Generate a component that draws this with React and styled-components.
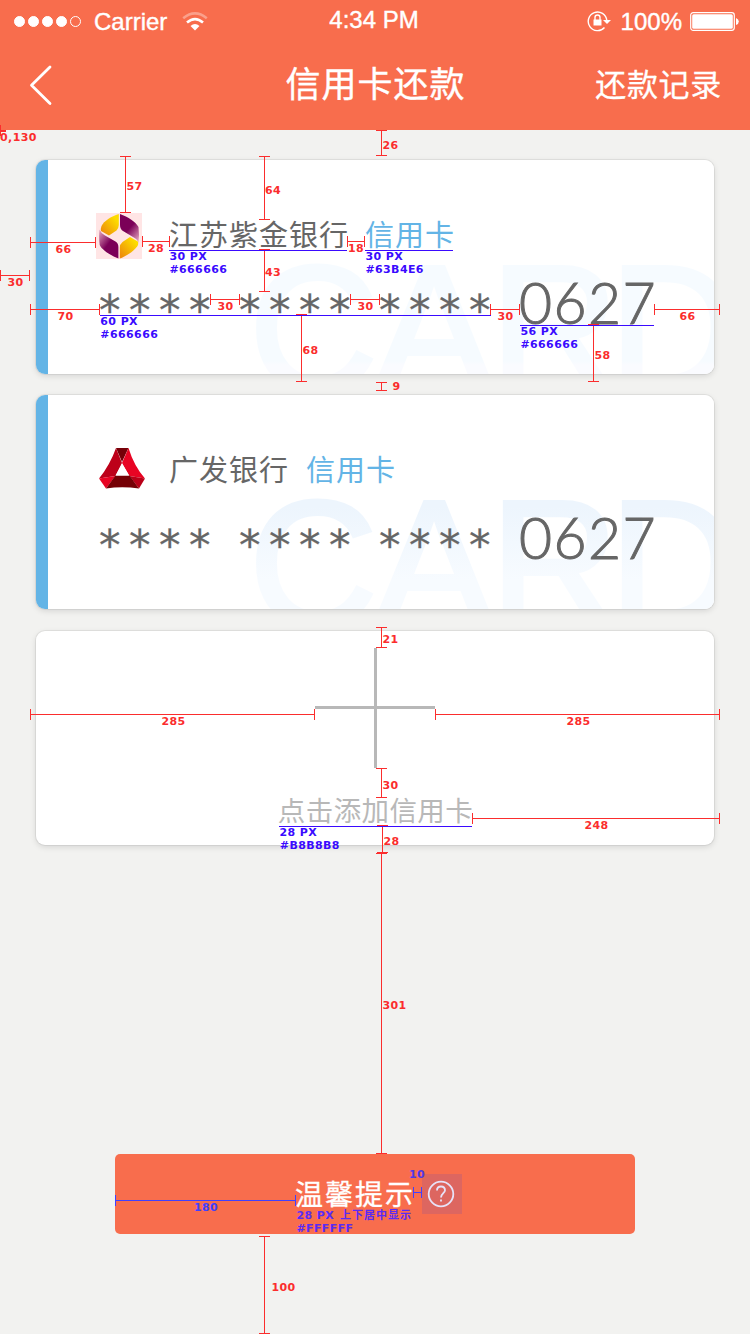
import React from 'react';
import styled, { createGlobalStyle, css } from 'styled-components';

const GlobalStyle = createGlobalStyle`
  * { box-sizing: border-box; }
  body { margin: 0; background: #f2f2f0; }
`;

const RED = '#fb2d2d';
const BLUE = '#3a0aff';

const Screen = styled.div`
  position: relative;
  display: flex;
  flex-direction: column;
  width: 750px;
  height: 1334px;
  overflow: hidden;
  background: #f2f2f0;
  font-family: 'Liberation Sans', 'Noto Sans CJK SC', sans-serif;
`;

const Header = styled.header`
  height: 130px;
  flex: none;
  color: #fff;
  background: #f86d4d;
`;

const StatusBar = styled.div`
  display: grid;
  grid-template-columns: 1fr auto 1fr;
  align-items: center;
  height: 40px;
  padding: 0 11px 0 14px;
  font-size: 24px;
  line-height: 40px;
  -webkit-text-stroke: 0.4px #fff;
`;

const StatusSide = styled.div`
  display: flex;
  align-items: center;
  justify-content: ${(p) => (p.$end ? 'flex-end' : 'flex-start')};
  padding-top: 1px;
`;

const Clock = styled.div`
  padding: 0 5px 2px 0;
  font-size: 24px;
`;

const Signal = styled.div`
  display: flex;
  gap: 3px;
  margin-right: 13px;
`;

const Dot = styled.i`
  width: 11px;
  height: 11px;
  border-radius: 50%;
  border: 1px solid #fff;
  background: ${(p) => (p.$on ? '#fff' : 'transparent')};
`;

const WifiIcon = styled.svg`
  margin-left: 15px;
`;

const LockIcon = styled.svg`
  margin-right: 10px;
`;

const BatteryIcon = styled.svg`
  margin-left: 8px;
`;

const NavBar = styled.nav`
  display: grid;
  grid-template-columns: 1fr auto 1fr;
  align-items: center;
  height: 90px;
  padding: 0 28px 0 29px;
`;

const Title = styled.h1`
  margin: 0;
  font-size: 35px;
  font-weight: 400;
  letter-spacing: 1px;
  line-height: 88px;
  -webkit-text-stroke: 0.4px #fff;
`;

const NavLink = styled.span`
  justify-self: end;
  padding-bottom: 5px;
  font-size: 31px;
  letter-spacing: 0.7px;
  -webkit-text-stroke: 0.3px #fff;
`;

const Main = styled.main`
  display: flex;
  flex-direction: column;
  align-items: center;
  padding-top: 30px;
`;

const Card = styled.section`
  position: relative;
  width: 678px;
  height: 214px;
  margin-bottom: ${(p) => p.$gap || 21}px;
  border-radius: 9px;
  overflow: hidden;
  background: #fff;
  box-shadow: 0 0 0 1px rgba(0, 0, 0, 0.06), 0 2px 6px rgba(0, 0, 0, 0.12);
`;

const BankCard = styled(Card)`
  padding: 50px 0 0 60px;
  background: linear-gradient(90deg, #63b4e6 12px, #fff 12px);
`;

const Watermark = styled.div`
  position: absolute;
  left: 213px;
  top: 67px;
  font-size: 178px;
  line-height: 203px;
  letter-spacing: -3px;
  white-space: nowrap;
  color: transparent;
  -webkit-text-stroke: 4px transparent;
  background: ${(p) =>
    p.$pale
      ? 'linear-gradient(#f6fbff 10%, #f6fbff 66%, #fafbff 68%)'
      : 'linear-gradient(#edf5fd 22%, #f7fbff 58%)'};
  background-clip: text;

  span { letter-spacing: -9.5px; }
`;

const BankRow = styled.div`
  position: relative;
  display: flex;
  align-items: center;
  height: 50px;
  font-size: 29px;
  letter-spacing: 1px;
  color: #666;
`;

const BankName = styled.span`
  margin-top: -4px;
`;

const LogoBox = styled.div`
  display: flex;
  width: 46px;
  height: 46px;
  margin: ${(p) => (p.$tint ? '1px 27px 0 0' : '-5px 24px 0 3px')};
  background: ${(p) => (p.$tint ? '#ffe5e5' : 'transparent')};
`;

const CardKind = styled.span`
  margin-top: -4px;
  margin-left: ${(p) => p.$gap}px;
  color: #63b4e6;
`;

const NumberRow = styled.div`
  position: relative;
  display: flex;
  align-items: flex-start;
  padding-left: 3px;
  color: #666;
`;

const Stars = styled.span`
  width: 140px;
  font-family: 'DejaVu Sans', sans-serif;
  font-size: 43px;
  line-height: 54px;
  letter-spacing: 8.5px;
  margin-top: 23px;
  -webkit-text-stroke: 0.3px #666;
`;

const Digits = styled.span`
  font-family: Lato, sans-serif;
  font-size: 57px;
  font-weight: 300;
  line-height: 68px;
  letter-spacing: 1.4px;
  margin-top: 8px;
  -webkit-text-stroke: 1px #666;
`;

const AddCard = styled(Card)`
  display: flex;
  flex-direction: column;
  align-items: center;
  padding-top: 17px;
  font-size: 27.5px;
  color: #b8b8b8;
`;

const AddText = styled.span`
  margin-top: 24px;
  padding-left: 1px;
  letter-spacing: 0.4px;
  line-height: 40px;
`;

const TipButton = styled.button`
  display: flex;
  align-items: center;
  width: 520px;
  height: 80px;
  margin-top: 288px;
  padding: 0 0 0 180px;
  border: 0;
  border-radius: 5px;
  color: #fff;
  background: #f86d4d;
  font: 28px 'Noto Sans CJK SC', sans-serif;
  letter-spacing: 2px;
`;

const TipText = styled.span`
  padding-bottom: 2px;
  -webkit-text-stroke: 0.3px #fff;
`;

const HelpSlot = styled.span`
  display: flex;
  align-items: center;
  justify-content: center;
  width: 40px;
  height: 40px;
  margin-left: 7px;
  padding-right: 2px;
  background: rgba(90, 70, 190, 0.17);
`;

const Spec = styled.div`
  position: absolute;
  inset: 0;
  pointer-events: none;
`;

const Measure = styled.i`
  position: absolute;
  color: ${(p) => p.$color || RED};
  ${(p) =>
    p.$vertical
      ? css`
          left: ${p.$x - 5}px;
          top: ${p.$y}px;
          width: 11px;
          height: ${p.$len}px;
          border: solid currentColor;
          border-width: 1px 0;
          background: linear-gradient(currentColor, currentColor) 5px 0 / 1px 100% no-repeat;
        `
      : css`
          left: ${p.$x}px;
          top: ${p.$y - 5}px;
          width: ${p.$len}px;
          height: 11px;
          border: solid currentColor;
          border-width: 0 1px;
          background: linear-gradient(currentColor, currentColor) 0 5px / 100% 1px no-repeat;
        `}
`;

const Underline = styled.i`
  position: absolute;
  left: ${(p) => p.$x}px;
  top: ${(p) => p.$y}px;
  width: ${(p) => p.$len}px;
  height: 1px;
  background: ${BLUE};
`;

const Label = styled.span`
  position: absolute;
  left: ${(p) => p.$x}px;
  top: ${(p) => p.$y - 2}px;
  font: bold 11px/13px 'DejaVu Sans', 'Noto Sans CJK SC', sans-serif;
  letter-spacing: ${(p) => (p.$wide ? 1 : 0.4)}px;
  white-space: pre;
  color: ${(p) => p.$color || RED};
`;

const horizontals = [
  [30, 66, 242], [142, 28, 241], [347, 18, 241], [0, 30, 275], [30, 70, 309],
  [210, 30, 299], [350, 30, 299], [490, 30, 309], [654, 66, 309],
  [30, 285, 714], [435, 285, 714], [472, 248, 818],
];

const verticals = [
  [381, 130, 26], [125, 156, 57], [264, 156, 64], [264, 249, 43], [301, 314, 68],
  [593, 324, 58], [381, 382, 9], [381, 627, 21], [381, 768, 30], [382, 825, 28],
  [381, 853, 301], [264, 1236, 98],
];

const redLabels = [
  ['0,130', 0, 133], ['26', 382.4, 141], ['57', 126.4, 182], ['64', 265, 186],
  ['66', 55.4, 245], ['28', 148, 244], ['18', 348, 244], ['43', 265, 268],
  ['30', 7.4, 278], ['70', 57.4, 312], ['30', 217.4, 302], ['30', 357.4, 302],
  ['30', 497.4, 312], ['66', 679.4, 312], ['68', 302.4, 346], ['58', 594.4, 351],
  ['9', 392.4, 382], ['21', 382.4, 635], ['285', 161.4, 717], ['285', 566.4, 717],
  ['30', 382.4, 781], ['248', 584.4, 821], ['28', 383.4, 837], ['301', 382.4, 1001],
  ['100', 271.4, 1283],
];

const blueLabels = [
  ['30 PX', 169.4, 252], ['#666666', 169.4, 265], ['30 PX', 365.4, 252], ['#63B4E6', 365.4, 265],
  ['60 PX', 100.3, 317], ['#666666', 100.3, 330], ['56 PX', 520.4, 327], ['#666666', 520.4, 340],
  ['28 PX', 279.4, 828], ['#B8B8B8', 279.8, 841],
  ['#FFFFFF', 296.4, 1224],
];

const underlines = [
  [169, 250, 178], [365, 250, 88], [100, 315, 391], [520, 325, 134], [279, 826, 193],
];

function ZijinLogo() {
  return (
    <svg width="46" height="46" viewBox="0 0 46 46">
      <defs>
        <linearGradient id="gold" x1="1" y1="0" x2="0" y2="1">
          <stop offset="0.2" stopColor="#fddc00" />
          <stop offset="0.9" stopColor="#ee8d0c" />
        </linearGradient>
        <linearGradient id="plumTop" x1="0.3" y1="0.2" x2="0.9" y2="1">
          <stop offset="0.35" stopColor="#7b0058" />
          <stop offset="1" stopColor="#e7aac0" />
        </linearGradient>
        <linearGradient id="plumLow" x1="0.7" y1="0.8" x2="0" y2="0">
          <stop offset="0.35" stopColor="#7b0058" />
          <stop offset="1" stopColor="#e7aac0" />
        </linearGradient>
      </defs>
      <path d="M22.8 1C15 3.500 8 8 5.500 13Q4.500 15.500 5 18L13 22.500L20.500 17.500Q22.800 15 22.800 12Z" fill="url(#gold)" />
      <path d="M24 1C32 4 40 9 42.500 14Q43.500 22 42.500 30Q41.500 26 37 24L27 18Q24 16 24 12Z" fill="url(#plumTop)" />
      <path d="M3.500 16.500Q5 20.500 9 22.500L19.500 28.500Q22.400 30 22.400 34V45.500C14 42 6 37 3.700 32Q2.700 24 3.500 16.500Z" fill="url(#plumLow)" />
      <path d="M23.800 45.500C31 43 39.500 37 42 32Q42.500 30 41.800 28.500L34 24L26.500 29Q23.800 31 23.800 35Z" fill="url(#gold)" />
    </svg>
  );
}

function GuangfaLogo() {
  return (
    <svg width="46" height="46" viewBox="0 0 46 46">
      <path d="M17 3H29.5L23 17Z" fill="#750008" />
      <path d="M17 3L23 18L16.5 31L0 33.5Q11 20 17 3Z" fill="#bd0019" />
      <path d="M29.5 3L23 18L30.5 31L46 33.5Q35 21 29.5 3Z" fill="#e80423" />
      <path d="M0 33.5L16.5 31L7 43.5Z" fill="#e80423" />
      <path d="M46 33.5L30.5 31L40 43.5Z" fill="#b90018" />
      <path d="M16.5 30.5H30.5L40 43.5Q23 41 7 43.5Z" fill="#750005" />
      <path d="M23 18.5L30 30.5H16.5Z" fill="#fff" />
    </svg>
  );
}

function CardNumber() {
  return (
    <NumberRow>
      <Stars>****</Stars>
      <Stars>****</Stars>
      <Stars>****</Stars>
      <Digits>0627</Digits>
    </NumberRow>
  );
}

function CreditCard({ bank, logo, tint, pale, kindGap, gap }) {
  return (
    <BankCard $gap={gap}>
      <Watermark $pale={pale}>CA<span>R</span>D</Watermark>
      <BankRow>
        <LogoBox $tint={tint}>{logo}</LogoBox>
        <BankName>{bank}</BankName>
        <CardKind $gap={kindGap}>信用卡</CardKind>
      </BankRow>
      <CardNumber />
    </BankCard>
  );
}

export default function App() {
  return (
    <Screen>
      <GlobalStyle />
      <Header>
        <StatusBar>
          <StatusSide>
            <Signal>
              <Dot $on /><Dot $on /><Dot $on /><Dot $on /><Dot />
            </Signal>
            Carrier
            <WifiIcon width="26" height="20" viewBox="0 0 26 20" fill="none" stroke="#fff" strokeWidth="2.6">
              <path d="M1.200 6.200Q13-3.400 24.800 6.200" opacity=".35" />
              <path d="M5 10.500Q13 3.600 21 10.500" />
              <path d="M8.500 14Q13 10.200 17.500 14L13 18.500Z" fill="#fff" stroke="none" />
            </WifiIcon>
          </StatusSide>
          <Clock>4:34 PM</Clock>
          <StatusSide $end>
            <LockIcon width="24" height="22" viewBox="0 0 24 22" fill="none" stroke="#fff" strokeWidth="1.4">
              <path d="M17.500 16.500A9.300 9.300 0 1 1 19.800 9.300" />
              <path d="M16 9H24L20 13Z" fill="#fff" stroke="none" />
              <path d="M6.500 8.500H14.500V14.500H6.500Z" fill="#fff" stroke="none" />
              <path d="M8 9V6.500Q8 4 10.500 4T13 6.500V9" />
            </LockIcon>
            100%
            <BatteryIcon width="49" height="20" viewBox="0 0 49 20">
              <rect x=".7" y=".7" width="43.600" height="17.600" rx="2.500" fill="none" stroke="#fff" strokeWidth="1.200" />
              <rect x="2.200" y="2.200" width="40.600" height="14.600" rx="1.500" fill="#fff" />
              <path d="M46 6Q48.800 7 48.800 9.500T46 13Z" fill="#fff" />
            </BatteryIcon>
          </StatusSide>
        </StatusBar>
        <NavBar>
          <svg width="24" height="42" viewBox="0 0 24 42" fill="none" stroke="#fff" strokeWidth="2.800" strokeLinecap="round" strokeLinejoin="round">
            <path d="M21 3L2.500 21.300L21 39.600" />
          </svg>
          <Title>信用卡还款</Title>
          <NavLink>还款记录</NavLink>
        </NavBar>
      </Header>

      <Main>
        <CreditCard bank="江苏紫金银行" logo={<ZijinLogo />} tint pale kindGap={16} />
        <CreditCard bank="广发银行" logo={<GuangfaLogo />} kindGap={17} gap={22} />
        <AddCard>
          <svg width="120" height="120" viewBox="0 0 120 120" fill="#b8b8b8">
            <path d="M59 0h3v120h-3zM0 58h120v3H0z" />
          </svg>
          <AddText>点击添加信用卡</AddText>
        </AddCard>
        <TipButton>
          <TipText>温馨提示</TipText>
          <HelpSlot>
            <svg width="28" height="28" viewBox="0 0 28 28" fill="none" stroke="#e7e2f8" strokeWidth="1.800">
              <circle cx="14" cy="14" r="12.300" />
              <path d="M10 10.500Q10 6.500 14 6.500T18 10.300C18 13 14 13.500 14 17.500M14 19.500V21.500" />
            </svg>
          </HelpSlot>
        </TipButton>
      </Main>

      <Spec>
        {horizontals.map(([x, len, y]) => (
          <Measure key={`${x}-${y}`} $x={x} $y={y} $len={len} />
        ))}
        {verticals.map(([x, y, len]) => (
          <Measure key={`${x}-${y}`} $vertical $x={x} $y={y} $len={len} />
        ))}
        <Measure $x={-6} $y={130} $len={7} />
        <Measure $vertical $x={0} $y={130} $len={1} />
        <Measure $color="#4040ff" $x={115} $y={1200} $len={181} />
        <Measure $color="#4040ff" $x={413} $y={1192} $len={9} />
        {underlines.map(([x, y, len]) => (
          <Underline key={`${x}-${y}`} $x={x} $y={y} $len={len} />
        ))}
        {redLabels.map(([text, x, y]) => (
          <Label key={`${x}-${y}`} $x={x} $y={y}>{text}</Label>
        ))}
        {blueLabels.map(([text, x, y]) => (
          <Label key={`${x}-${y}`} $color={y > 1200 ? '#5a2bf5' : BLUE} $x={x} $y={y}>{text}</Label>
        ))}
        <Label $color="#5a2bf5" $x={296.4} $y={1211}>28 PX</Label>
        <Label $color="#5a2bf5" $wide $x={340} $y={1211}>上下居中显示</Label>
        <Label $color="#4040ff" $x={194} $y={1203}>180</Label>
        <Label $color="#5038e8" $x={409} $y={1170}>10</Label>
      </Spec>
    </Screen>
  );
}
